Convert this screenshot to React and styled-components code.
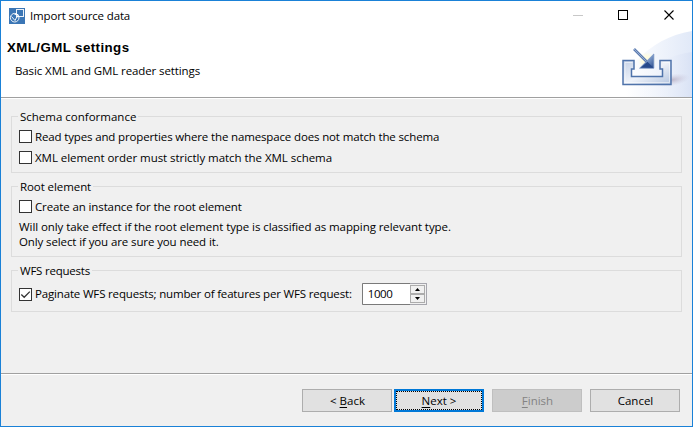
import React from "react";
import styled, { createGlobalStyle, css } from "styled-components";

const Global = createGlobalStyle`
  * { box-sizing: border-box; }
  body { margin: 0; overflow: hidden; }
`;

const Window = styled.div`
  width: 693px;
  height: 427px;
  display: flex;
  flex-direction: column;
  border: 1px solid #1a81d7;
  background: #f0f0f0;
  color: #000;
  font: 11.5px/16px "Open Sans", "Noto Sans", sans-serif;
`;

const Label = styled.span`
  white-space: pre;
  letter-spacing: ${(p) => p.$track || 0}px;
`;

const Header = styled.header`
  position: relative;
  flex: none;
  height: 98px;
  background: #fff;
  border-bottom: 1px solid #fff;
  box-shadow: inset 0 -1px #a0a0a0;
`;

const Banner = styled.svg`
  position: absolute;
  right: 0;
  top: 29px;
  width: 91px;
  height: 67px;
`;

const TitleBar = styled.div`
  height: 29px;
  display: flex;
  align-items: center;
  padding-left: 8px;
`;

const Caption = styled.div`
  flex: 1;
  padding-left: 5px;
  height: 16px;
`;

const WindowControls = styled.svg`
  width: 138px;
  height: 29px;
`;

const Heading = styled.h1`
  margin: 10px 0 0 6px;
  font: bold 13.3px/16px "Liberation Sans", Arial, sans-serif;
`;

const Subtitle = styled.p`
  margin: 7px 0 0 14px;
`;

const Body = styled.main`
  flex: 1;
  display: flex;
  flex-direction: column;
  gap: 6px;
  padding: 10px 10px 0 10px;
`;

const Group = styled.fieldset`
  margin: 0;
  min-width: 0;
  height: ${(p) => p.$height}px;
  padding: 0 0 0 7px;
  border: 1px solid #dcdcdc;
`;

const Legend = styled.legend`
  height: 15px;
  line-height: 15px;
  margin-left: -1px;
  padding: 0 2px;
`;

const Option = styled.label`
  display: flex;
  align-items: center;
  height: ${(p) => p.$height || 21}px;
  margin-top: ${(p) => p.$offset || 0}px;
  gap: 3px;
`;

const Box = styled.span`
  flex: none;
  width: 13px;
  height: 13px;
  border: 1px solid #333;
  background: #fff;
  svg { display: block; }
`;

const Note = styled.p`
  margin: 2px 0 0;
  line-height: 15px;
`;

const Spinner = styled.span`
  display: flex;
  width: 65px;
  height: 22px;
  margin-left: 7px;
  border: 1px solid #a6a6ad;
  border-left-color: #7a7a7a;
  background: #fff;
`;

const Value = styled.span`
  width: 47px;
  padding: 2px 0 0 5px;
  box-shadow: 0 -1px #7a7a7a, 0 1px #7a7a7a;
`;

const Steppers = styled.span`
  flex: 1;
  display: flex;
  flex-direction: column;
  padding: 1px 1px 1px 0;
  background: #f0f0f0;
`;

const Step = styled.span`
  flex: 1;
  display: grid;
  place-items: center;
  border: 1px solid #acacac;
  background: #f0f0f0;
`;

const Footer = styled.footer`
  display: flex;
  justify-content: flex-end;
  height: 53px;
  padding: 15px 12px 0;
  border-top: 1px solid #a0a0a0;
  box-shadow: inset 0 1px #fff;
`;

const Button = styled.button`
  width: 90px;
  height: 23px;
  padding: 0 0 0 1px;
  margin-left: ${(p) => p.$gap}px;
  border: 1px solid #adadad;
  background: #e1e1e1;
  color: #000;
  font: inherit;
  line-height: 16px;
  ${(p) => p.$focused && css`
    padding-left: 0;
    border: 2px solid #0078d7;
    outline: 1px dotted #000;
    outline-offset: -3px;
  `}
  ${(p) => p.disabled && css`
    border-color: #bfbfbf;
    background: #ccc;
    color: #838383;
  `}
`;

const Key = styled.span`
  text-decoration: underline;
  text-underline-offset: 2px;
  text-decoration-thickness: 1px;
  text-decoration-skip-ink: none;
`;

function Check({ checked }) {
  return (
    <Box>
      {checked && (
        <svg width="11" height="11" viewBox="0 0 11 11">
          <path d="M1.3 5.5 4.2 8.3 9.8 2.6" fill="none" stroke="#333" strokeWidth="1.3" />
        </svg>
      )}
    </Box>
  );
}

function AppIcon() {
  return (
    <svg width="16" height="16" viewBox="0 0 16 16">
      <rect width="16" height="16" fill="#3b76b5" />
      <g fill="none" stroke="#fff" strokeOpacity=".9">
        <rect x="7.500" y="1.500" width="7" height="7" />
        <circle cx="5.700" cy="9.700" r="4.300" />
        <path d="M2.500 8.500 6 12.500 8.500 7.500M5.500 6.500h3.500v3" />
      </g>
    </svg>
  );
}

function ImportBanner() {
  return (
    <Banner viewBox="600 30 91 67">
      <defs>
        <linearGradient id="outer" gradientUnits="userSpaceOnUse" x1="625" x2="691" y1="0" y2="0">
          <stop offset="0" stopColor="#fff" />
          <stop offset="1" stopColor="#e1e9f8" />
        </linearGradient>
        <linearGradient id="inner" gradientUnits="userSpaceOnUse" x1="635" x2="691" y1="0" y2="0">
          <stop offset="0" stopColor="#fff" stopOpacity="0" />
          <stop offset="1" stopColor="#d9e2f5" />
        </linearGradient>
        <linearGradient id="tray" x1="0" x2="1" y1="0" y2="1">
          <stop offset="0" stopColor="#c3d0e6" />
          <stop offset=".5" stopColor="#eef2f9" />
          <stop offset="1" stopColor="#b3c4df" />
        </linearGradient>
        <linearGradient id="arrow" x1=".2" x2="1" y1=".2" y2="1">
          <stop offset="0" stopColor="#b5c7e3" />
          <stop offset=".5" stopColor="#6e8cbe" />
          <stop offset="1" stopColor="#2a4c8c" />
        </linearGradient>
        <radialGradient id="shade">
          <stop offset="0" stopColor="#a99bb0" stopOpacity=".65" />
          <stop offset="1" stopColor="#c9c4da" stopOpacity="0" />
        </radialGradient>
        <radialGradient id="glow">
          <stop offset=".5" stopColor="#fffce0" />
          <stop offset="1" stopColor="#fffce0" stopOpacity="0" />
        </radialGradient>
      </defs>
      <path d="M612 97C620 76 645 38 691 31V97Z" fill="url(#outer)" />
      <path d="M630 97C638 77 658 56 691 52V97Z" fill="url(#inner)" />
      <ellipse cx="671" cy="80" rx="18" ry="6" fill="url(#shade)" transform="rotate(-10 671 80)" />
      <circle cx="646" cy="61" r="9" fill="url(#glow)" />
      <path
        d="M622 60.500h11v8.500h-2.500v7.500h31v-7.500h-2.500v-8.500h11v24h-48Z"
        fill="url(#tray)" stroke="#4f73aa" strokeWidth="1.500"
      />
      <path d="M624 83V62.500h7.500M661.500 62.500h7V82.500H624" fill="none" stroke="#fff" strokeOpacity=".5" />
      <path d="m633 49 13 13" stroke="#5b7bb0" strokeWidth="2.600" />
      <path d="m633 49 12 12" stroke="#a6b9d8" strokeWidth=".8" />
      <path d="M652.800 54v14.200h-14.200Z" fill="url(#arrow)" stroke="#7693c4" strokeWidth=".8" />
      <path d="m639.500 67.800 7-6 6 6Z" fill="#274a8b" />
    </Banner>
  );
}

export default function App() {
  return (
    <>
      <Global />
      <Window>
        <Header>
          <ImportBanner />
          <TitleBar>
            <AppIcon />
            <Caption><Label $track={-0.14}>Import source data</Label></Caption>
            <WindowControls viewBox="554 1 138 29">
              <path d="M573 15.500h10" stroke="#c8c8c8" />
              <rect x="618.500" y="10.500" width="9" height="9" fill="none" stroke="#000" />
              <path d="m664.500 10.500 9 9m0-9-9 9" stroke="#000" strokeWidth="1.1" />
            </WindowControls>
          </TitleBar>
          <Heading><Label $track={0.42}>XML/GML settings</Label></Heading>
          <Subtitle><Label $track={-0.1}>Basic XML and GML reader settings</Label></Subtitle>
        </Header>
        <Body>
          <Group $height={64}>
            <Legend><Label>Schema conformance</Label></Legend>
            <Option $offset={2}><Check /><Label $track={-0.143}>Read types and properties where the namespace does not match the schema</Label></Option>
            <Option><Check /><Label $track={-0.045}>XML element order must strictly match the XML schema</Label></Option>
          </Group>
          <Group $height={78}>
            <Legend><Label $track={-0.08}>Root element</Label></Legend>
            <Option $offset={2}><Check /><Label $track={-0.12}>Create an instance for the root element</Label></Option>
            <Note>
              <Label $track={-0.073}>Will only take effect if the root element type is classified as mapping relevant type.</Label>
              <br />
              <Label $track={-0.11}>Only select if you are sure you need it.</Label>
            </Note>
          </Group>
          <Group $height={49}>
            <Legend><Label $track={-0.22}>WFS requests</Label></Legend>
            <Option $offset={4} $height={24}>
              <Check checked />
              <Label $track={-0.17}>Paginate WFS requests; number of features per WFS request:</Label>
              <Spinner>
                <Value><Label $track={-0.4}>1000</Label></Value>
                <Steppers>
                  <Step><svg width="5" height="3"><path d="M0 3 2.500 0 5 3Z" /></svg></Step>
                  <Step><svg width="5" height="3"><path d="M0 0h5L2.500 3Z" /></svg></Step>
                </Steppers>
              </Spinner>
            </Option>
          </Group>
        </Body>
        <Footer>
          <Button $gap={0}>&lt; <Key>B</Key>ack</Button>
          <Button $gap={2} $focused><Key>N</Key>ext &gt;</Button>
          <Button $gap={8} disabled><Key>F</Key>inish</Button>
          <Button $gap={8}>Cancel</Button>
        </Footer>
      </Window>
    </>
  );
}
